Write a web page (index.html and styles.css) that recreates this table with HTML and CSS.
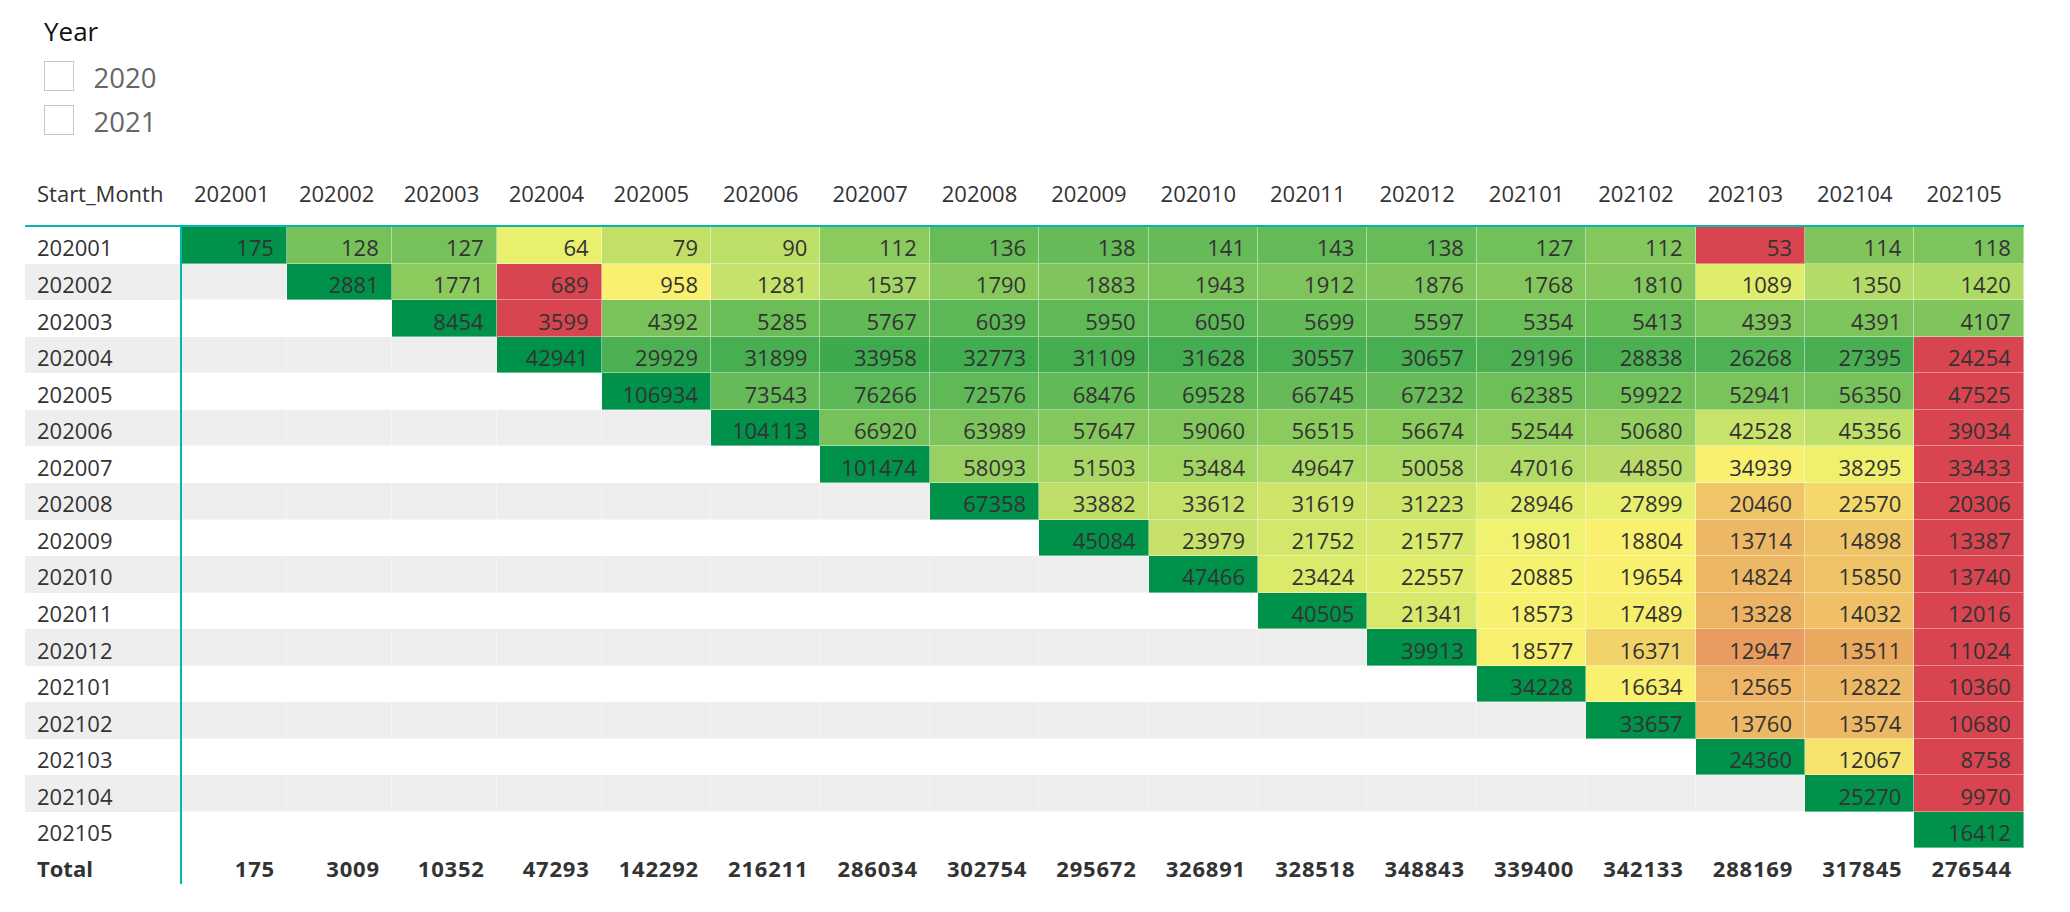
FILE: index.html
```html
<!DOCTYPE html>
<html lang="en">
<head>
<meta charset="utf-8">
<title>Cohort matrix</title>
<link rel="stylesheet" href="styles.css">
</head>
<body>
<div class="slicer">
  <div class="slicer-title">Year</div>
  <div class="opt"><span class="box"></span><span class="opt-label">2020</span></div>
  <div class="opt"><span class="box"></span><span class="opt-label">2021</span></div>
</div>

<div class="matrix">
  <div class="row head">
    <div class="hc">Start_Month</div>
    <div class="hc">202001</div><div class="hc">202002</div><div class="hc">202003</div><div class="hc">202004</div>
    <div class="hc">202005</div><div class="hc">202006</div><div class="hc">202007</div><div class="hc">202008</div>
    <div class="hc">202009</div><div class="hc">202010</div><div class="hc">202011</div><div class="hc">202012</div>
    <div class="hc">202101</div><div class="hc">202102</div><div class="hc">202103</div><div class="hc">202104</div>
    <div class="hc">202105</div>
  </div>

  <div class="row">
    <div class="rh">202001</div>
    <div class="c dg">175</div>
    <div class="c" style="background:#76C15A">128</div>
    <div class="c" style="background:#76C15A">127</div>
    <div class="c" style="background:#E8F06E">64</div>
    <div class="c" style="background:#C2E068">79</div>
    <div class="c" style="background:#BDE068">90</div>
    <div class="c" style="background:#8BCB5E">112</div>
    <div class="c" style="background:#68BC58">136</div>
    <div class="c" style="background:#66BB58">138</div>
    <div class="c" style="background:#66BB58">141</div>
    <div class="c" style="background:#64BA57">143</div>
    <div class="c" style="background:#68BC58">138</div>
    <div class="c" style="background:#72C05A">127</div>
    <div class="c" style="background:#84C75D">112</div>
    <div class="c rd">53</div>
    <div class="c" style="background:#80C55C">114</div>
    <div class="c" style="background:#7DC45C">118</div>
  </div>

  <div class="row alt">
    <div class="rh">202002</div>
    <div class="c"></div>
    <div class="c dg">2881</div>
    <div class="c" style="background:#8BCB5E">1771</div>
    <div class="c rd">689</div>
    <div class="c" style="background:#F8F06E">958</div>
    <div class="c" style="background:#C5E26A">1281</div>
    <div class="c" style="background:#A5D665">1537</div>
    <div class="c" style="background:#87C95D">1790</div>
    <div class="c" style="background:#80C55C">1883</div>
    <div class="c" style="background:#7AC35B">1943</div>
    <div class="c" style="background:#7DC45C">1912</div>
    <div class="c" style="background:#80C55C">1876</div>
    <div class="c" style="background:#84C75D">1768</div>
    <div class="c" style="background:#84C75D">1810</div>
    <div class="c" style="background:#E0ED6C">1089</div>
    <div class="c" style="background:#B3DB68">1350</div>
    <div class="c" style="background:#B0DA66">1420</div>
  </div>

  <div class="row">
    <div class="rh">202003</div>
    <div class="c"></div><div class="c"></div>
    <div class="c dg">8454</div>
    <div class="c rd">3599</div>
    <div class="c" style="background:#7AC35B">4392</div>
    <div class="c" style="background:#6BBD58">5285</div>
    <div class="c" style="background:#62BA57">5767</div>
    <div class="c" style="background:#5CB856">6039</div>
    <div class="c" style="background:#5EB956">5950</div>
    <div class="c" style="background:#5CB856">6050</div>
    <div class="c" style="background:#62BA57">5699</div>
    <div class="c" style="background:#64BA57">5597</div>
    <div class="c" style="background:#6BBD58">5354</div>
    <div class="c" style="background:#68BC58">5413</div>
    <div class="c" style="background:#7CC45B">4393</div>
    <div class="c" style="background:#7DC45C">4391</div>
    <div class="c" style="background:#80C55C">4107</div>
  </div>

  <div class="row alt">
    <div class="rh">202004</div>
    <div class="c"></div><div class="c"></div><div class="c"></div>
    <div class="c dg">42941</div>
    <div class="c" style="background:#4CB053">29929</div>
    <div class="c" style="background:#48AE52">31899</div>
    <div class="c" style="background:#3DAA4E">33958</div>
    <div class="c" style="background:#42AC50">32773</div>
    <div class="c" style="background:#46AE51">31109</div>
    <div class="c" style="background:#44AD51">31628</div>
    <div class="c" style="background:#48AE52">30557</div>
    <div class="c" style="background:#48AE52">30657</div>
    <div class="c" style="background:#4CB053">29196</div>
    <div class="c" style="background:#4CB053">28838</div>
    <div class="c" style="background:#4EB153">26268</div>
    <div class="c" style="background:#4AAF53">27395</div>
    <div class="c rd">24254</div>
  </div>

  <div class="row">
    <div class="rh">202005</div>
    <div class="c"></div><div class="c"></div><div class="c"></div><div class="c"></div>
    <div class="c dg">106934</div>
    <div class="c" style="background:#66BB58">73543</div>
    <div class="c" style="background:#5CB856">76266</div>
    <div class="c" style="background:#5EB956">72576</div>
    <div class="c" style="background:#62BA57">68476</div>
    <div class="c" style="background:#62BA57">69528</div>
    <div class="c" style="background:#66BB58">66745</div>
    <div class="c" style="background:#66BB58">67232</div>
    <div class="c" style="background:#6FBF59">62385</div>
    <div class="c" style="background:#72C05A">59922</div>
    <div class="c" style="background:#7AC35B">52941</div>
    <div class="c" style="background:#76C15A">56350</div>
    <div class="c rd">47525</div>
  </div>

  <div class="row alt">
    <div class="rh">202006</div>
    <div class="c"></div><div class="c"></div><div class="c"></div><div class="c"></div><div class="c"></div>
    <div class="c dg">104113</div>
    <div class="c" style="background:#76C15A">66920</div>
    <div class="c" style="background:#7DC45C">63989</div>
    <div class="c" style="background:#84C75D">57647</div>
    <div class="c" style="background:#84C75D">59060</div>
    <div class="c" style="background:#8BCB5E">56515</div>
    <div class="c" style="background:#8BCB5E">56674</div>
    <div class="c" style="background:#92CD60">52544</div>
    <div class="c" style="background:#96CF61">50680</div>
    <div class="c" style="background:#C8E36A">42528</div>
    <div class="c" style="background:#BDE068">45356</div>
    <div class="c rd">39034</div>
  </div>

  <div class="row">
    <div class="rh">202007</div>
    <div class="c"></div><div class="c"></div><div class="c"></div><div class="c"></div><div class="c"></div><div class="c"></div>
    <div class="c dg">101474</div>
    <div class="c" style="background:#98D062">58093</div>
    <div class="c" style="background:#A8D765">51503</div>
    <div class="c" style="background:#A3D564">53484</div>
    <div class="c" style="background:#ADD966">49647</div>
    <div class="c" style="background:#ADD966">50058</div>
    <div class="c" style="background:#B2DA66">47016</div>
    <div class="c" style="background:#B8DC67">44850</div>
    <div class="c" style="background:#F8F06E">34939</div>
    <div class="c" style="background:#EEF06E">38295</div>
    <div class="c rd">33433</div>
  </div>

  <div class="row alt">
    <div class="rh">202008</div>
    <div class="c"></div><div class="c"></div><div class="c"></div><div class="c"></div><div class="c"></div><div class="c"></div><div class="c"></div>
    <div class="c dg">67358</div>
    <div class="c" style="background:#C0DF68">33882</div>
    <div class="c" style="background:#C5E169">33612</div>
    <div class="c" style="background:#CEE56A">31619</div>
    <div class="c" style="background:#CEE56A">31223</div>
    <div class="c" style="background:#E2EC6C">28946</div>
    <div class="c" style="background:#E8EE6D">27899</div>
    <div class="c" style="background:#EFC567">20460</div>
    <div class="c" style="background:#F4D86A">22570</div>
    <div class="c rd">20306</div>
  </div>

  <div class="row">
    <div class="rh">202009</div>
    <div class="c"></div><div class="c"></div><div class="c"></div><div class="c"></div><div class="c"></div><div class="c"></div><div class="c"></div><div class="c"></div>
    <div class="c dg">45084</div>
    <div class="c" style="background:#C8E269">23979</div>
    <div class="c" style="background:#D3E76B">21752</div>
    <div class="c" style="background:#D8E96B">21577</div>
    <div class="c" style="background:#F1F26F">19801</div>
    <div class="c" style="background:#F8F06E">18804</div>
    <div class="c" style="background:#EDB865">13714</div>
    <div class="c" style="background:#EFC466">14898</div>
    <div class="c rd">13387</div>
  </div>

  <div class="row alt">
    <div class="rh">202010</div>
    <div class="c"></div><div class="c"></div><div class="c"></div><div class="c"></div><div class="c"></div><div class="c"></div><div class="c"></div><div class="c"></div><div class="c"></div>
    <div class="c dg">47466</div>
    <div class="c" style="background:#DCEA6C">23424</div>
    <div class="c" style="background:#E2EC6C">22557</div>
    <div class="c" style="background:#F4F26F">20885</div>
    <div class="c" style="background:#F8F06E">19654</div>
    <div class="c" style="background:#EDB865">14824</div>
    <div class="c" style="background:#EFC466">15850</div>
    <div class="c rd">13740</div>
  </div>

  <div class="row">
    <div class="rh">202011</div>
    <div class="c"></div><div class="c"></div><div class="c"></div><div class="c"></div><div class="c"></div><div class="c"></div><div class="c"></div><div class="c"></div><div class="c"></div><div class="c"></div>
    <div class="c dg">40505</div>
    <div class="c" style="background:#D7E86B">21341</div>
    <div class="c" style="background:#F6F26F">18573</div>
    <div class="c" style="background:#F8EE6E">17489</div>
    <div class="c" style="background:#EDB365">13328</div>
    <div class="c" style="background:#EFC066">14032</div>
    <div class="c rd">12016</div>
  </div>

  <div class="row alt">
    <div class="rh">202012</div>
    <div class="c"></div><div class="c"></div><div class="c"></div><div class="c"></div><div class="c"></div><div class="c"></div><div class="c"></div><div class="c"></div><div class="c"></div><div class="c"></div><div class="c"></div>
    <div class="c dg">39913</div>
    <div class="c" style="background:#F8EF6E">18577</div>
    <div class="c" style="background:#F2D36A">16371</div>
    <div class="c" style="background:#E89C5F">12947</div>
    <div class="c" style="background:#E9A95F">13511</div>
    <div class="c rd">11024</div>
  </div>

  <div class="row">
    <div class="rh">202101</div>
    <div class="c"></div><div class="c"></div><div class="c"></div><div class="c"></div><div class="c"></div><div class="c"></div><div class="c"></div><div class="c"></div><div class="c"></div><div class="c"></div><div class="c"></div><div class="c"></div>
    <div class="c dg">34228</div>
    <div class="c" style="background:#F8F06E">16634</div>
    <div class="c" style="background:#EDB565">12565</div>
    <div class="c" style="background:#EDB865">12822</div>
    <div class="c rd">10360</div>
  </div>

  <div class="row alt">
    <div class="rh">202102</div>
    <div class="c"></div><div class="c"></div><div class="c"></div><div class="c"></div><div class="c"></div><div class="c"></div><div class="c"></div><div class="c"></div><div class="c"></div><div class="c"></div><div class="c"></div><div class="c"></div><div class="c"></div>
    <div class="c dg">33657</div>
    <div class="c" style="background:#EDB865">13760</div>
    <div class="c" style="background:#EDB865">13574</div>
    <div class="c rd">10680</div>
  </div>

  <div class="row">
    <div class="rh">202103</div>
    <div class="c"></div><div class="c"></div><div class="c"></div><div class="c"></div><div class="c"></div><div class="c"></div><div class="c"></div><div class="c"></div><div class="c"></div><div class="c"></div><div class="c"></div><div class="c"></div><div class="c"></div><div class="c"></div>
    <div class="c dg">24360</div>
    <div class="c" style="background:#F5E36D">12067</div>
    <div class="c rd">8758</div>
  </div>

  <div class="row alt">
    <div class="rh">202104</div>
    <div class="c"></div><div class="c"></div><div class="c"></div><div class="c"></div><div class="c"></div><div class="c"></div><div class="c"></div><div class="c"></div><div class="c"></div><div class="c"></div><div class="c"></div><div class="c"></div><div class="c"></div><div class="c"></div><div class="c"></div>
    <div class="c dg">25270</div>
    <div class="c rd">9970</div>
  </div>

  <div class="row">
    <div class="rh">202105</div>
    <div class="c"></div><div class="c"></div><div class="c"></div><div class="c"></div><div class="c"></div><div class="c"></div><div class="c"></div><div class="c"></div><div class="c"></div><div class="c"></div><div class="c"></div><div class="c"></div><div class="c"></div><div class="c"></div><div class="c"></div><div class="c"></div>
    <div class="c dg">16412</div>
  </div>

  <div class="row total">
    <div class="rh">Total</div>
    <div class="c">175</div><div class="c">3009</div><div class="c">10352</div><div class="c">47293</div>
    <div class="c">142292</div><div class="c">216211</div><div class="c">286034</div><div class="c">302754</div>
    <div class="c">295672</div><div class="c">326891</div><div class="c">328518</div><div class="c">348843</div>
    <div class="c">339400</div><div class="c">342133</div><div class="c">288169</div><div class="c">317845</div>
    <div class="c">276544</div>
  </div>
</div>
</body>
</html>
```

FILE: styles.css
```css
* { box-sizing: border-box; }

body {
  margin: 0;
  background: #ffffff;
  font-family: "Open Sans", "Noto Sans", sans-serif;
  color: #333333;
}

/* Year slicer */
.slicer {
  padding: 16px 0 0 44px;
}
.slicer-title {
  font-size: 26px;
  line-height: 30px;
  color: #111111;
  margin-bottom: 8px;
}
.opt {
  display: flex;
  align-items: center;
  height: 44px;
}
.box {
  width: 30px;
  height: 30px;
  border: 1.5px solid #c6c6c6;
  background: #ffffff;
}
.opt-label {
  margin-left: 19.5px;
  padding-top: 2px;
  font-size: 27.5px;
  color: #666666;
}

/* Matrix */
.matrix {
  margin-left: 25px;
  width: 1999px;
}
.row {
  display: grid;
  grid-template-columns: 157px repeat(4, 104.9px) repeat(13, 109.42px);
  height: 36.55px;
}
.row.alt { background: #eeeeee; }

.head {
  height: 85.2px;
  border-bottom: 2px solid #01b8aa;
  align-items: end;
}
.hc {
  font-size: 22px;
  line-height: 22px;
  padding: 0 0 21.5px 12px;
  white-space: nowrap;
  color: #333333;
}

.rh {
  font-size: 22px;
  line-height: 22px;
  padding: 9.3px 0 0 12px;
  border-right: 2px solid #01b8aa;
  white-space: nowrap;
}
.c {
  font-size: 22px;
  line-height: 22px;
  padding: 9.3px 12px 0 0;
  text-align: right;
  white-space: nowrap;
  border-right: 1px solid rgba(255, 255, 255, 0.45);
  border-bottom: 1px solid rgba(255, 255, 255, 0.4);
}
.c.dg { background: #00914a; }
.c.rd { background: #d84550; }

.total { height: 36px; }
.total .rh,
.total .c {
  font-weight: 700;
  padding-top: 8.2px;
}
.total .c {
  border: none;
  letter-spacing: 0.8px;
  padding-right: 12px;
}
```
